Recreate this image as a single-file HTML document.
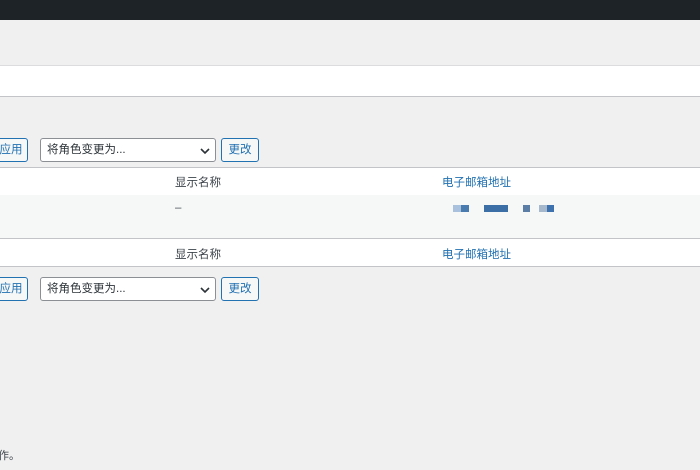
<!DOCTYPE html>
<html><head><meta charset="utf-8"><style>
body{margin:0;width:700px;height:470px;background:#f0f0f1;position:relative;overflow:hidden;font-family:"Liberation Sans","Noto Sans CJK SC",sans-serif;font-size:11.5px;color:#3c434a}
.a{position:absolute}
.bar{left:0;top:0;width:700px;height:20px;background:#1d2327}
.band{left:-2px;top:65px;width:704px;height:30px;background:#fff;border-top:1px solid #dcdcde;border-bottom:1px solid #c3c4c7}
.btn{height:22px;border:1px solid #2271b1;border-radius:3px;background:#f6f7f7;color:#2271b1;line-height:22px;text-align:center;box-sizing:content-box}
.sel{width:168px;height:22px;border:1px solid #8c8f94;border-radius:3px;background:#fff;line-height:22px;padding-left:6px;color:#2c3338;box-sizing:content-box}
.sel svg{position:absolute;right:4px;top:6px}
.row{left:-2px;width:704px;border-bottom:1px solid #c3c4c7}
.blue{color:#2271b1}
</style></head><body>
<div class="a bar"></div>
<div class="a band"></div>
<div class="a btn" style="left:-6px;top:138px;width:32px">应用</div>
<div class="a sel" style="left:40px;top:138px">将角色变更为...<svg width="12" height="12" viewBox="0 0 12 12"><path d="M2 4l4 4 4-4" fill="none" stroke="#2c3338" stroke-width="1.6"/></svg></div>
<div class="a btn" style="left:221px;top:138px;width:36px">更改</div>
<div class="a row" style="top:167px;height:27px;background:#fff;border-top:1px solid #c3c4c7"></div>
<div class="a" style="left:175px;top:174px">显示名称</div>
<div class="a blue" style="left:442px;top:174px">电子邮箱地址</div>
<div class="a row" style="top:195px;height:43px;background:#f6f7f7"></div>
<div class="a" style="left:175px;top:202px;color:#50575e">–</div>
<div class="a" style="left:453px;top:205px;width:8px;height:7px;background:#a9c1dc"></div>
<div class="a" style="left:461px;top:205px;width:8px;height:7px;background:#4a7bae"></div>
<div class="a" style="left:484px;top:205px;width:24px;height:7px;background:#3c6fa6"></div>
<div class="a" style="left:523px;top:205px;width:7px;height:7px;background:#5a7ea5"></div>
<div class="a" style="left:539px;top:205px;width:8px;height:7px;background:#a5b8cc"></div>
<div class="a" style="left:547px;top:205px;width:7px;height:7px;background:#3e72ae"></div>
<div class="a row" style="top:239px;height:27px;background:#fff"></div>
<div class="a" style="left:175px;top:246px">显示名称</div>
<div class="a blue" style="left:442px;top:246px">电子邮箱地址</div>
<div class="a btn" style="left:-6px;top:277px;width:32px">应用</div>
<div class="a sel" style="left:40px;top:277px">将角色变更为...<svg width="12" height="12" viewBox="0 0 12 12"><path d="M2 4l4 4 4-4" fill="none" stroke="#2c3338" stroke-width="1.6"/></svg></div>
<div class="a btn" style="left:221px;top:277px;width:36px">更改</div>
<div class="a" style="left:-2px;top:447px;font-size:11px">作。</div>
</body></html>
